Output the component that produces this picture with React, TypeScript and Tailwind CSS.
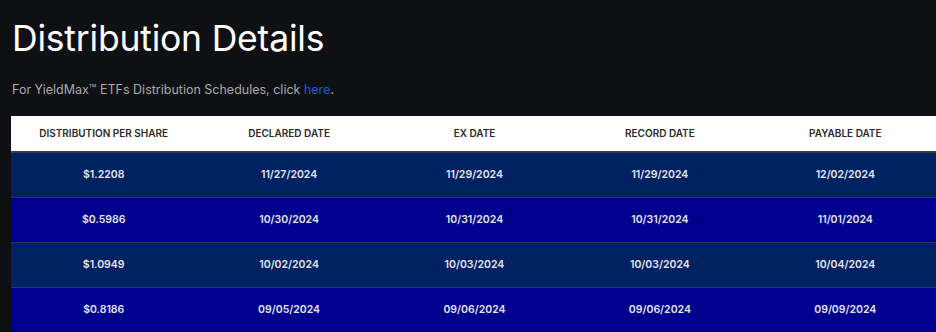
import React from "react";

const rows = [
  ["$1.2208", "11/27/2024", "11/29/2024", "11/29/2024", "12/02/2024"],
  ["$0.5986", "10/30/2024", "10/31/2024", "10/31/2024", "11/01/2024"],
  ["$1.0949", "10/02/2024", "10/03/2024", "10/03/2024", "10/04/2024"],
  ["$0.8186", "09/05/2024", "09/06/2024", "09/06/2024", "09/09/2024"],
];

const headers = ["DISTRIBUTION PER SHARE", "DECLARED DATE", "EX DATE", "RECORD DATE", "PAYABLE DATE"];

export default function App() {
  return (
    <div className="w-[936px] h-[332px] overflow-hidden bg-[#0f1013] font-['Inter',sans-serif]">
      <div className="pl-[11px]">
        <h1 className="pt-[19px] pl-[1px] text-[35.5px] leading-[40px] text-white font-normal tracking-[-0.2px]">Distribution Details</h1>
        <p className="mt-[23px] pl-[1px] text-[12.5px] leading-[16px] text-[#a9a9ad]">
          For YieldMax™ ETFs Distribution Schedules, click <span className="text-[#2458c9]">here</span>.
        </p>
        <div className="mt-[18px] w-[927px]">
          <div className="grid grid-cols-5 h-[37px] bg-white border-b-2 border-[#3d3d44] items-center">
            {headers.map((h) => (
              <div key={h} className="text-center text-[10px] font-semibold text-[#2a2a2a]">{h}</div>
            ))}
          </div>
          {rows.map((r, i) => (
            <div
              key={i}
              className={`grid grid-cols-5 h-[45px] items-center border-b border-[#2c3567] ${i % 2 === 0 ? "bg-[#002263]" : "bg-[#00008f]"}`}
            >
              {r.map((c, j) => (
                <div key={j} className="text-center text-[10.5px] font-semibold text-[#e4e4ea]">{c}</div>
              ))}
            </div>
          ))}
        </div>
      </div>
    </div>
  );
}
